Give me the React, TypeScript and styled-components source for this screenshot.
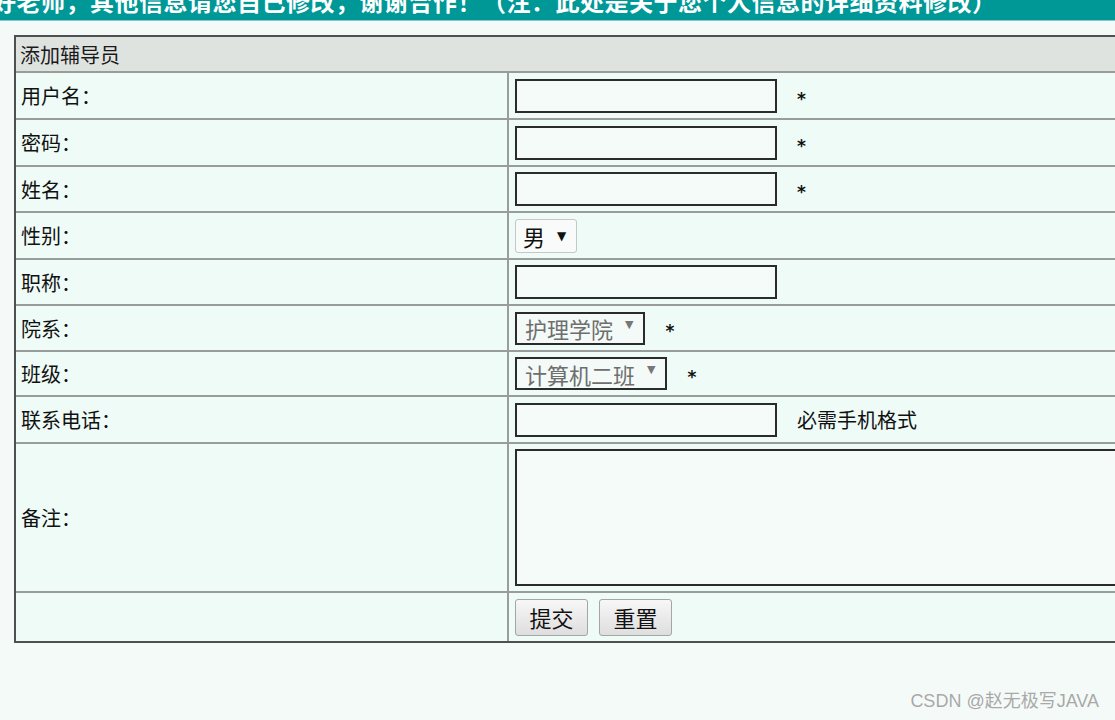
import React from "react";
import styled, { createGlobalStyle } from "styled-components";

const Global = createGlobalStyle`
  html, body {
    margin: 0;
    padding: 0;
    background: #f4faf7;
    overflow: hidden;
    width: 1115px;
    height: 720px;
  }
  body {
    font-family: "Noto Sans CJK SC", "Noto Sans", sans-serif;
    color: #111;
  }
`;

const Page = styled.div`
  position: relative;
  width: 1115px;
  height: 720px;
  overflow: hidden;
`;

const TopBar = styled.div`
  height: 20px;
  background: #009897;
  border-bottom: 1px solid #8cc6d6;
  overflow: hidden;
  white-space: nowrap;
`;

const TopText = styled.div`
  margin-top: -12px;
  margin-left: -8px;
  font-size: 24px;
  line-height: 26px;
  font-weight: 700;
  color: #ffffff;
  letter-spacing: 0.5px;
`;

const Form = styled.div`
  margin: 14px 0 0 14px;
  width: 1160px;
  display: grid;
  grid-template-columns: 491px 1fr;
  column-gap: 2px;
  row-gap: 2px;
  background: #9a9c9b;
  border: 2px solid #4e5150;
`;

const HeaderCell = styled.div`
  grid-column: 1 / span 2;
  height: 34px;
  background: #dfe3e0;
  display: flex;
  align-items: center;
  padding-left: 4px;
  font-size: 20px;
  color: #1a1a1a;
`;

const Label = styled.div<{ $h: number }>`
  height: ${(p) => p.$h}px;
  background: #eefbf6;
  display: flex;
  align-items: center;
  padding-left: 5px;
  font-size: 20px;
  color: #111;
`;

const Value = styled.div<{ $h: number }>`
  height: ${(p) => p.$h}px;
  background: #eefbf6;
  display: flex;
  align-items: center;
  padding-left: 6px;
  gap: 20px;
  font-size: 20px;
`;

const TextInput = styled.input`
  box-sizing: border-box;
  width: 262px;
  height: 34px;
  border: 2px solid #2b2b2b;
  background: #f5fbf8;
  margin: 0;
  padding: 0 4px;
  font-size: 18px;
  font-family: inherit;
`;

const Star = styled.span`
  font-family: "DejaVu Sans", sans-serif;
  font-size: 17px;
  font-weight: 700;
  color: #111;
  margin-top: 6px;
`;

const Note = styled.span`
  font-size: 20px;
  color: #111;
`;

const SelectBox = styled.div<{ $plain?: boolean }>`
  box-sizing: border-box;
  height: ${(p) => (p.$plain ? 34 : 33)}px;
  display: inline-flex;
  align-items: center;
  gap: 12px;
  padding: ${(p) => (p.$plain ? "0 10px 0 7px" : "0 10px 0 8px")};
  border: ${(p) => (p.$plain ? "1px solid #c4c8c6" : "2px solid #2b2b2b")};
  border-radius: ${(p) => (p.$plain ? 3 : 0)}px;
  background: ${(p) => (p.$plain ? "#f8fbf9" : "#f3faf7")};
  color: ${(p) => (p.$plain ? "#111" : "#6e6e6e")};
  font-size: 22px;
`;

const Arrow = styled.span<{ $plain?: boolean }>`
  font-family: "DejaVu Sans", sans-serif;
  font-size: ${(p) => (p.$plain ? 12 : 11)}px;
  color: ${(p) => (p.$plain ? "#111" : "#777")};
  margin-top: ${(p) => (p.$plain ? 0 : -8)}px;
`;

const TextArea = styled.textarea`
  box-sizing: border-box;
  width: 720px;
  height: 137px;
  border: 2px solid #2b2b2b;
  background: #f5fbf8;
  margin: 0;
  resize: none;
  font-family: inherit;
`;

const Buttons = styled.div`
  display: flex;
  gap: 11px;
`;

const Button = styled.button`
  box-sizing: border-box;
  width: 73px;
  height: 37px;
  border: 1px solid #a4a6a5;
  border-radius: 3px;
  background: linear-gradient(#f7f7f7, #dedede);
  font-family: inherit;
  font-size: 22px;
  color: #111;
  padding: 0;
  line-height: 1;
`;

const Watermark = styled.div`
  position: absolute;
  right: 16px;
  bottom: 8px;
  font-family: "Liberation Sans", "Noto Sans CJK SC", sans-serif;
  font-size: 18px;
  color: #a6a9a8;
  text-shadow: 0 0 1px #ffffff;
`;

type Row = {
  label: string;
  h: number;
  content: React.ReactNode;
};

export default function App() {
  const rows: Row[] = [
    {
      label: "用户名：",
      h: 45,
      content: (
        <>
          <TextInput />
          <Star>*</Star>
        </>
      ),
    },
    {
      label: "密码：",
      h: 45,
      content: (
        <>
          <TextInput type="password" />
          <Star>*</Star>
        </>
      ),
    },
    {
      label: "姓名：",
      h: 44,
      content: (
        <>
          <TextInput />
          <Star>*</Star>
        </>
      ),
    },
    {
      label: "性别：",
      h: 45,
      content: (
        <SelectBox $plain>
          男<Arrow $plain>▼</Arrow>
        </SelectBox>
      ),
    },
    {
      label: "职称：",
      h: 44,
      content: <TextInput />,
    },
    {
      label: "院系：",
      h: 44,
      content: (
        <>
          <SelectBox>
            护理学院<Arrow>▼</Arrow>
          </SelectBox>
          <Star>*</Star>
        </>
      ),
    },
    {
      label: "班级：",
      h: 43,
      content: (
        <>
          <SelectBox>
            计算机二班<Arrow>▼</Arrow>
          </SelectBox>
          <Star>*</Star>
        </>
      ),
    },
    {
      label: "联系电话：",
      h: 45,
      content: (
        <>
          <TextInput />
          <Note>必需手机格式</Note>
        </>
      ),
    },
    {
      label: "备注：",
      h: 147,
      content: <TextArea />,
    },
    {
      label: "",
      h: 48,
      content: (
        <Buttons>
          <Button>提交</Button>
          <Button>重置</Button>
        </Buttons>
      ),
    },
  ];

  return (
    <Page>
      <Global />
      <TopBar>
        <TopText>
          好老师，其他信息请您自己修改，谢谢合作！（注：此处是关于您个人信息的详细资料修改）
        </TopText>
      </TopBar>
      <Form>
        <HeaderCell>添加辅导员</HeaderCell>
        {rows.map((r, i) => (
          <React.Fragment key={i}>
            <Label $h={r.h}>{r.label}</Label>
            <Value $h={r.h}>{r.content}</Value>
          </React.Fragment>
        ))}
      </Form>
      <Watermark>CSDN @赵无极写JAVA</Watermark>
    </Page>
  );
}
